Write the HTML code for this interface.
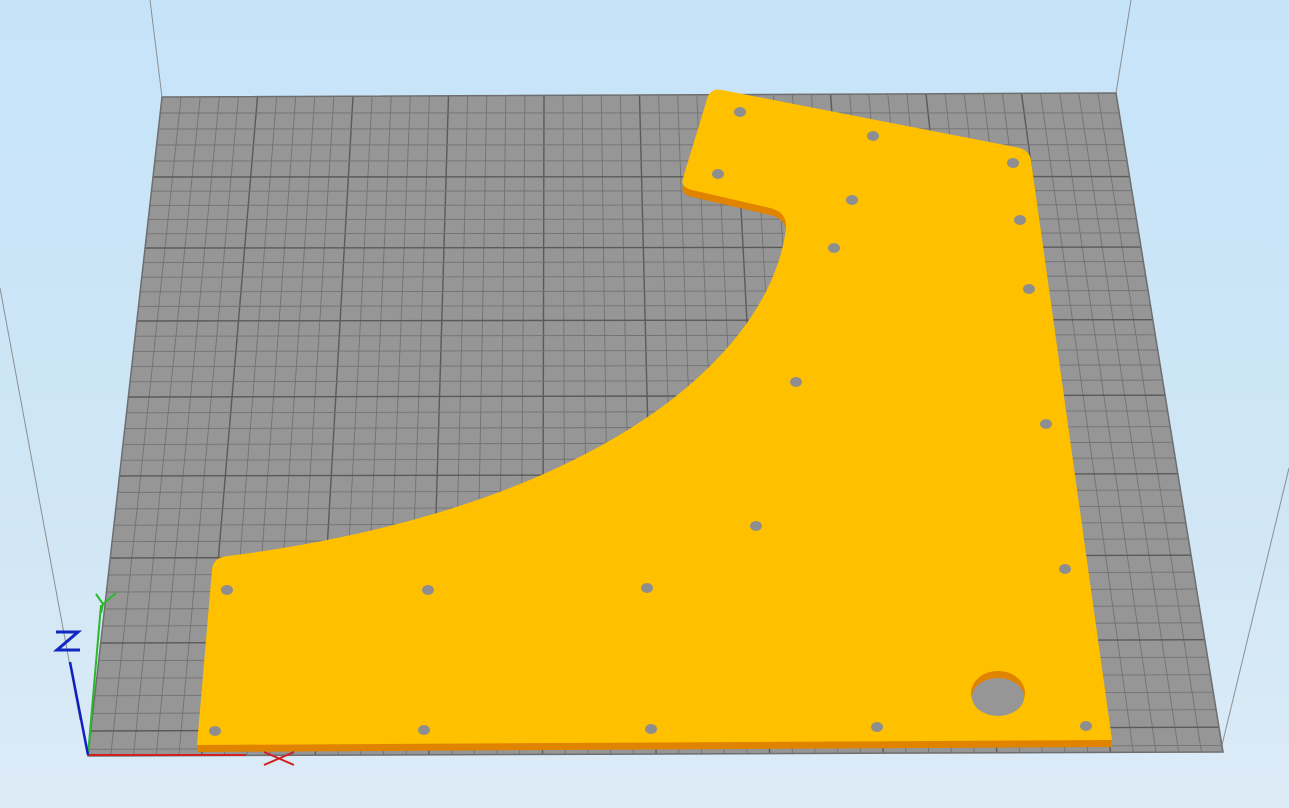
<!DOCTYPE html>
<html><head><meta charset="utf-8"><style>
html,body{margin:0;padding:0;width:1289px;height:808px;overflow:hidden}
body{background:linear-gradient(#c6e4f8 0%,#cfe6f6 60%,#dcebf6 100%)}
svg{position:absolute;left:0;top:0}
text{font-family:"Liberation Sans",sans-serif}
</style></head><body>
<svg id="s" width="1289" height="808" viewBox="0 0 1289 808">
<g stroke="#8a8f94" stroke-width="1" fill="none">
<line x1="150" y1="0" x2="162" y2="97"/>
<line x1="1131" y1="0" x2="1116" y2="93"/>
<line x1="0" y1="288" x2="80" y2="720"/>
<line x1="1289" y1="468" x2="1222" y2="745"/>
</g>
<polygon points="162,97 1116,93 1223,752 88,756" fill="#969696"/>
<g id="grid"></g>
<polygon points="162,97 1116,93 1223,752 88,756" fill="none" stroke="#6e6e6e" stroke-width="1.5"/>
<path transform="translate(0,7)" fill="#e08400" d="M197,745 L212,570 Q213,557 228,556 C590,510 770,360 786,228 Q787,212 770,208 L692,190 Q680,187 683,178 L708,96 Q712,88 722,90 L1020,148 Q1030,152 1031,160 L1112,740 Z"/>
<path id="top" fill="#ffc000" d="M197,745 L212,570 Q213,557 228,556 C590,510 770,360 786,228 Q787,212 770,208 L692,190 Q680,187 683,178 L708,96 Q712,88 722,90 L1020,148 Q1030,152 1031,160 L1112,740 Z"/>
<ellipse cx="998" cy="693" rx="27" ry="22" fill="#e08400"/>
<ellipse cx="998" cy="697" rx="26" ry="19" fill="#969696"/>
<g fill="#8e8e8e" id="holes"></g>
<line x1="88" y1="755" x2="246" y2="755" stroke="#d02020" stroke-width="2"/>
<line x1="88" y1="755" x2="101" y2="605" stroke="#2bb82b" stroke-width="2"/>
<line x1="88" y1="755" x2="70" y2="662" stroke="#1020c0" stroke-width="2.5"/>
<g stroke="#d02020" stroke-width="2" fill="none"><path d="M264,752 L294,765 M264,765 L294,752"/></g>
<g stroke="#2bb82b" stroke-width="2" fill="none"><path d="M96,594 L103,604 L116,593 M103,604 L101,613"/></g>
<g stroke="#1028c0" stroke-width="3" fill="none"><path d="M56,632 L78,632 L57,650 L80,650"/></g>
</svg>
<script>
var g=document.getElementById('grid'),NS='http://www.w3.org/2000/svg';
var TL=[162,97],TR=[1116,93],BR=[1223,752],BL=[88,756];
function L(a,b,c,w){var l=document.createElementNS(NS,'line');l.setAttribute('x1',a[0]);l.setAttribute('y1',a[1]);l.setAttribute('x2',b[0]);l.setAttribute('y2',b[1]);l.setAttribute('stroke',c);l.setAttribute('stroke-width',w);g.appendChild(l);}
function lerp(a,b,t){return [a[0]+(b[0]-a[0])*t,a[1]+(b[1]-a[1])*t];}
function ledge(y){var t=(y-TL[1])/(BL[1]-TL[1]);return lerp(TL,BL,t);}
function redge(y){var t=(y-TR[1])/(BR[1]-TR[1]);return lerp(TR,BR,t);}
for(var i=1;i<50;i++){var tu=Math.min(1,(i*19.1)/954);var a=lerp(TL,TR,tu),b=lerp(BL,BR,tu);var maj=i%5==0;L(a,b,maj?'#5a5a5a':'#727272',maj?1.4:0.9);}
var M=[97,177,248,321,397,476,558,643,731,756];
var ys=[];
for(var k=1;k<5;k++)ys.push([97+16*k,false]);
for(var j=1;j<M.length-1;j++){ys.push([M[j],true]);var d=(M[j+1]-M[j])/5;if(j<M.length-2){for(var k=1;k<5;k++)ys.push([M[j]+d*k,false]);}else{var d2=(M[j]-M[j-1])/5*1.04;for(var k=1;k*d2<M[j+1]-M[j]-2;k++)ys.push([M[j]+d2*k,false]);}}
ys.forEach(function(p){L(ledge(p[0]),redge(p[0]-(p[0]-97)*0.006),p[1]?'#5a5a5a':'#727272',p[1]?1.4:0.9);});
var H=[[740,112],[873,136],[1013,163],[718,174],[852,200],[1020,220],[834,248],[1029,289],[796,382],[1046,424],[756,526],[1065,569],[227,590],[428,590],[647,588],[215,731],[424,730],[651,729],[877,727],[1086,726]];
var hg=document.getElementById('holes');
H.forEach(function(h){var e=document.createElementNS(NS,'ellipse');e.setAttribute('cx',h[0]);e.setAttribute('cy',h[1]);e.setAttribute('rx',6);e.setAttribute('ry',5);hg.appendChild(e);});
</script>
</body></html>
